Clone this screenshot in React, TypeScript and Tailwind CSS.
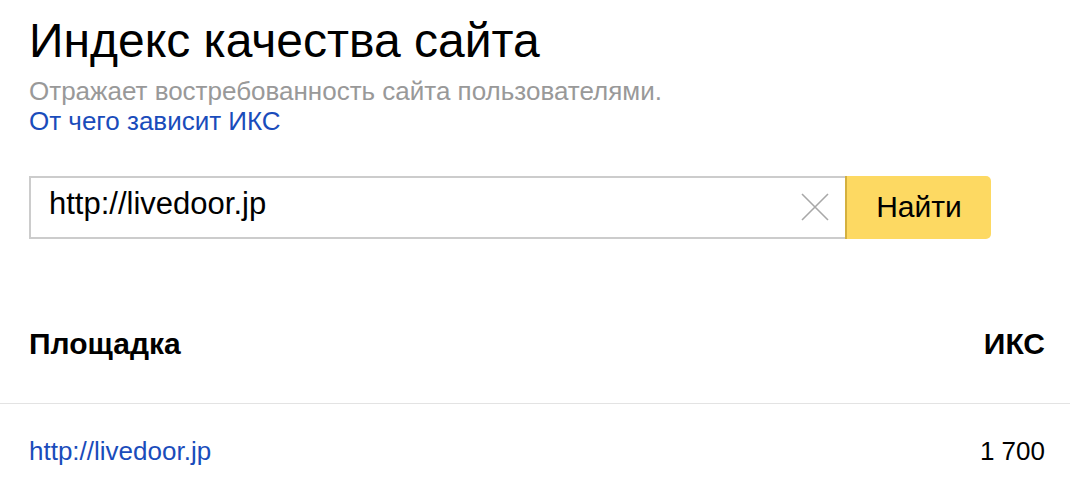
export default function App() {
  const font = { fontFamily: '"Liberation Sans", Arial, sans-serif' };
  return (
    <div className="w-[1070px] h-[494px] bg-white text-black overflow-hidden" style={font}>
      <div className="pl-[29px] pr-[25px] pt-[11px]">
        <h1 className="text-[48px] leading-[60px] font-normal text-black">Индекс качества сайта</h1>
        <p className="mt-[5px] text-[26px] leading-[30px] text-[#999999]">
          Отражает востребованность сайта пользователями.
        </p>
        <a className="block text-[26px] leading-[30px] text-[#1a4cbb]">От чего зависит ИКС</a>
        <div className="mt-[40px] flex h-[63px] w-[962px]">
          <div className="flex flex-1 items-center border-2 border-r-0 border-[#cccccc] bg-white pl-[18px] pr-[16px]">
            <span className="flex-1 pb-[6px] text-[31px] text-black">http://livedoor.jp</span>
            <svg width="28" height="28" viewBox="0 0 28 28" className="mb-[2px]">
              <path d="M1 1 L27 27 M27 1 L1 27" stroke="#a8a8a8" strokeWidth="1.6" fill="none" />
            </svg>
          </div>
          <button className="flex w-[146px] items-center justify-center rounded-r-[5px] border-l-2 border-[#d4b03f] bg-[#fdd962] pb-[3px] text-[30px] text-black">
            Найти
          </button>
        </div>
      </div>
      <div className="mt-[87px]">
        <div className="flex justify-between border-b border-[#e3e3e3] pb-[41px] pl-[29px] pr-[25px] text-[30px] font-bold leading-[36px]">
          <span>Площадка</span>
          <span>ИКС</span>
        </div>
        <div className="flex justify-between pl-[29px] pr-[25px] pt-[32px] text-[26px] leading-[30px]">
          <a className="text-[#1a4cbb]">http://livedoor.jp</a>
          <span>1 700</span>
        </div>
      </div>
    </div>
  );
}
